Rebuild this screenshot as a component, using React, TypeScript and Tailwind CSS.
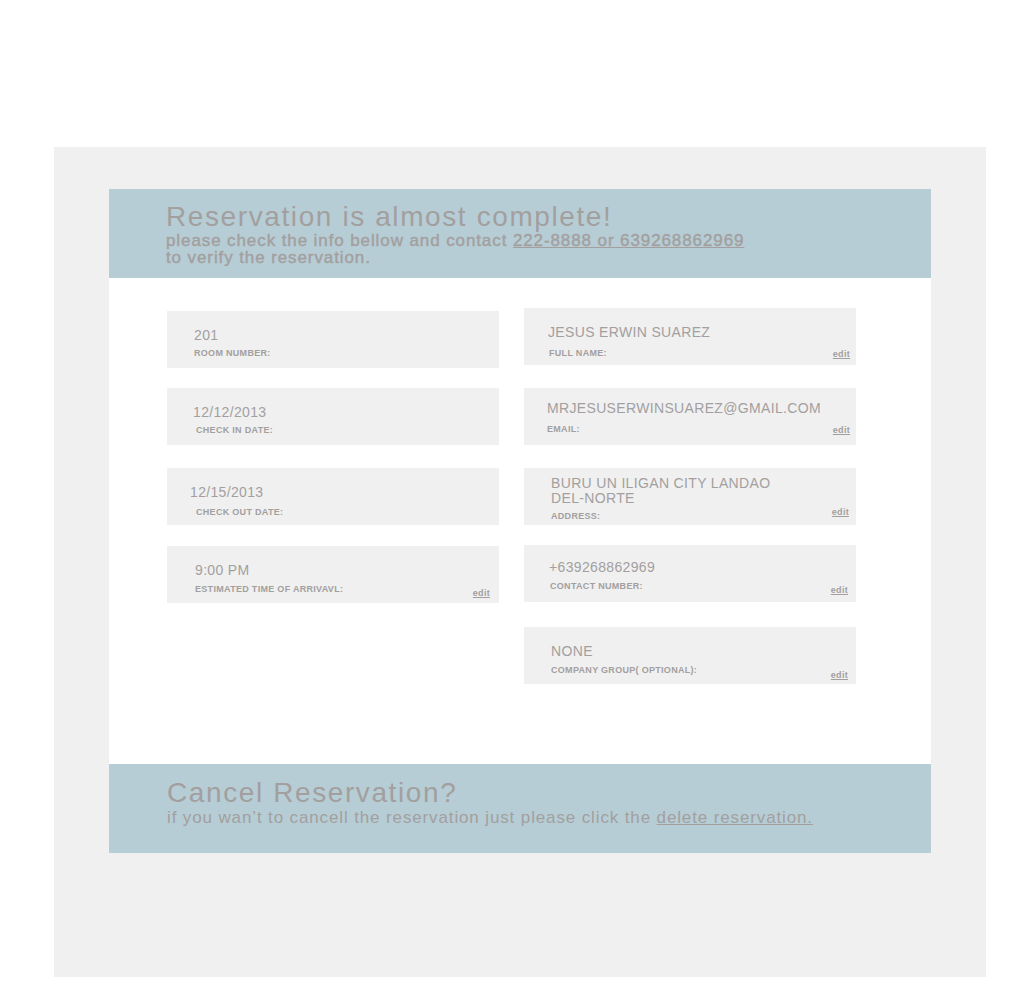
type Field = {
  value: string[];
  label: string;
  edit?: string;
  box: string;
  val: string;
  lab: string;
};

const left: Field[] = [
  { value: ['201'], label: 'ROOM NUMBER:', box: 'mt-[33px]', val: 'pl-[27px] pt-[17px]', lab: 'pl-[27px] mt-[5px]' },
  { value: ['12/12/2013'], label: 'CHECK IN DATE:', box: 'mt-[20px]', val: 'pl-[26px] pt-[17px]', lab: 'pl-[29px] mt-[5px]' },
  { value: ['12/15/2013'], label: 'CHECK OUT DATE:', box: 'mt-[23px]', val: 'pl-[23px] pt-[17px]', lab: 'pl-[29px] mt-[7px]' },
  { value: ['9:00 PM'], label: 'ESTIMATED TIME OF ARRIVAVL:', edit: 'right-[9px] bottom-[5px]', box: 'mt-[21px]', val: 'pl-[28px] pt-[17px]', lab: 'pl-[28px] mt-[6px]' },
];

const right: Field[] = [
  { value: ['JESUS ERWIN SUAREZ'], label: 'FULL NAME:', edit: 'right-[6px] bottom-[6px]', box: 'mt-[30px]', val: 'pl-[24px] pt-[17px]', lab: 'pl-[25px] mt-[8px]' },
  { value: ['MRJESUSERWINSUAREZ@GMAIL.COM'], label: 'EMAIL:', edit: 'right-[6px] bottom-[10px]', box: 'mt-[23px]', val: 'pl-[23px] pt-[13px]', lab: 'pl-[23px] mt-[8px]' },
  { value: ['BURU UN ILIGAN CITY LANDAO', 'DEL-NORTE'], label: 'ADDRESS:', edit: 'right-[7px] bottom-[8px]', box: 'mt-[23px]', val: 'pl-[27px] pt-[8px]', lab: 'pl-[27px] mt-[5px]' },
  { value: ['+639268862969'], label: 'CONTACT NUMBER:', edit: 'right-[8px] bottom-[7px]', box: 'mt-[20px]', val: 'pl-[25px] pt-[15px]', lab: 'pl-[26px] mt-[6px]' },
  { value: ['NONE'], label: 'COMPANY GROUP( OPTIONAL):', edit: 'right-[8px] bottom-[4px]', box: 'mt-[25px]', val: 'pl-[27px] pt-[17px]', lab: 'pl-[27px] mt-[6px]' },
];

function FieldBox({ f }: { f: Field }) {
  return (
    <div className={`relative h-[57px] bg-[#f0f0f0] ${f.box}`}>
      <div className={`text-[14px] leading-[15px] tracking-[0.34px] ${f.val}`}>
        {f.value.map((v) => (
          <div key={v}>{v}</div>
        ))}
      </div>
      <div className={`text-[9px] leading-[10px] font-bold tracking-[0.3px] ${f.lab}`}>{f.label}</div>
      {f.edit && (
        <a className={`absolute text-[9px] leading-[10px] font-bold underline tracking-[0.3px] ${f.edit}`}>edit</a>
      )}
    </div>
  );
}

export default function App() {
  return (
    <div className="w-[1024px] h-[1000px] bg-white pt-[147px] text-[#a39f9f] font-['Liberation_Sans',Arial,sans-serif]">
      <div className="ml-[54px] w-[932px] h-[830px] bg-[#f0f0f0] pt-[42px] px-[55px]">
        <div className="w-[822px] bg-white">
          <div className="h-[89px] bg-[#b6cdd5] pl-[57px] pt-[13px]">
            <h1 className="text-[28px] leading-[30px] tracking-[1.6px]">Reservation is almost complete!</h1>
            <p className="text-[17px] leading-[17px] tracking-[0.9px] [-webkit-text-stroke:0.4px_#a39f9f]">
              please check the info bellow and contact{' '}
              <a className="underline">222-8888 or 639268862969</a>
              <br />
              to verify the reservation.
            </p>
          </div>
          <div className="h-[486px] flex pl-[58px] gap-[25px]">
            <div className="w-[332px]">
              {left.map((f) => (
                <FieldBox key={f.label} f={f} />
              ))}
            </div>
            <div className="w-[332px]">
              {right.map((f) => (
                <FieldBox key={f.label} f={f} />
              ))}
            </div>
          </div>
          <div className="h-[89px] bg-[#b6cdd5] pl-[58px] pt-[14px]">
            <h2 className="text-[28px] leading-[30px] tracking-[1.6px]">Cancel Reservation?</h2>
            <p className="text-[17px] leading-[19px] tracking-[0.87px]">
              if you wan’t to cancell the reservation just please click the{' '}
              <a className="underline">delete reservation.</a>
            </p>
          </div>
        </div>
      </div>
    </div>
  );
}
